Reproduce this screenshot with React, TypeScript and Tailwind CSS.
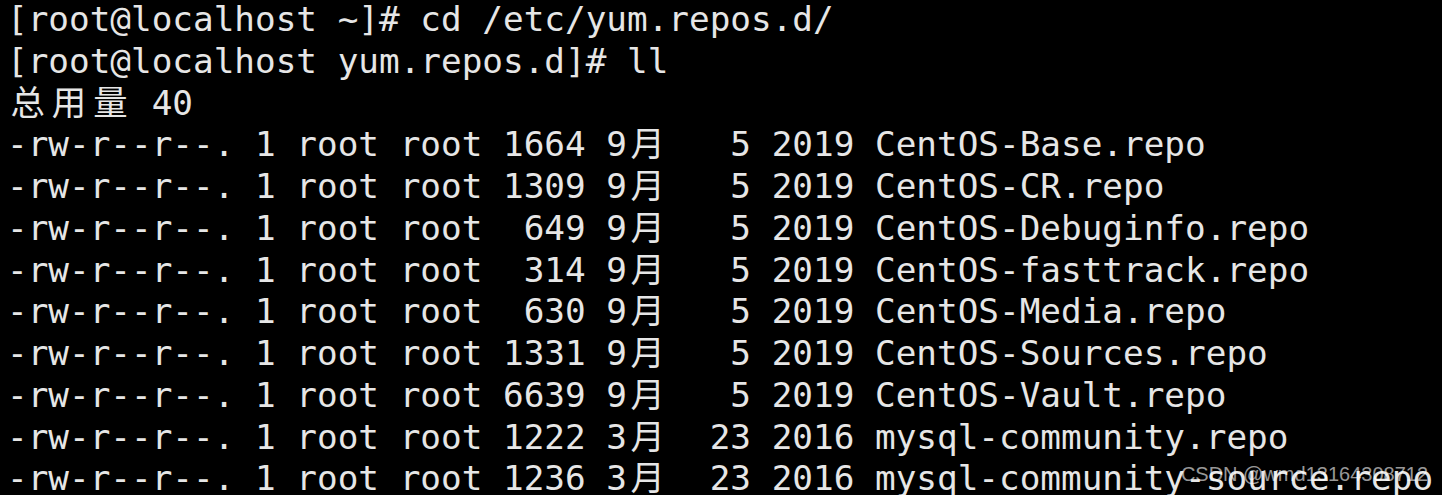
import React from "react";

const lines = [
  "[root@localhost ~]# cd /etc/yum.repos.d/",
  "[root@localhost yum.repos.d]# ll",
  "总用量 40",
  "-rw-r--r--. 1 root root 1664 9月   5 2019 CentOS-Base.repo",
  "-rw-r--r--. 1 root root 1309 9月   5 2019 CentOS-CR.repo",
  "-rw-r--r--. 1 root root  649 9月   5 2019 CentOS-Debuginfo.repo",
  "-rw-r--r--. 1 root root  314 9月   5 2019 CentOS-fasttrack.repo",
  "-rw-r--r--. 1 root root  630 9月   5 2019 CentOS-Media.repo",
  "-rw-r--r--. 1 root root 1331 9月   5 2019 CentOS-Sources.repo",
  "-rw-r--r--. 1 root root 6639 9月   5 2019 CentOS-Vault.repo",
  "-rw-r--r--. 1 root root 1222 3月  23 2016 mysql-community.repo",
  "-rw-r--r--. 1 root root 1236 3月  23 2016 mysql-community-source.repo",
];

// wide (CJK) characters take two terminal cells
function Line({ text }: { text: string }) {
  const parts: React.ReactNode[] = [];
  let buf = "";
  Array.from(text).forEach((ch, i) => {
    if (/[\u4e00-\u9fff]/.test(ch)) {
      if (buf) parts.push(buf);
      buf = "";
      parts.push(
        <span key={i} className="inline-block w-[2ch] text-center">
          {ch}
        </span>
      );
    } else {
      buf += ch;
    }
  });
  if (buf) parts.push(buf);
  return <div className="h-[41.75px] leading-[41.75px] whitespace-pre">{parts}</div>;
}

export default function App() {
  return (
    <div className="relative w-[1442px] h-[495px] overflow-hidden bg-black">
      <div
        className="pl-[7px] -mt-[1px] text-[34.35px] text-[#e6e6e6]"
        style={{ fontFamily: '"DejaVu Sans Mono", "Noto Sans CJK SC", monospace' }}
      >
        {lines.map((l, i) => (
          <Line key={i} text={l} />
        ))}
      </div>
      <div className="absolute right-[14px] bottom-[6px] text-[20px] text-white/60 font-['Liberation_Sans',sans-serif]">
        CSDN @wmd13164308712
      </div>
    </div>
  );
}
